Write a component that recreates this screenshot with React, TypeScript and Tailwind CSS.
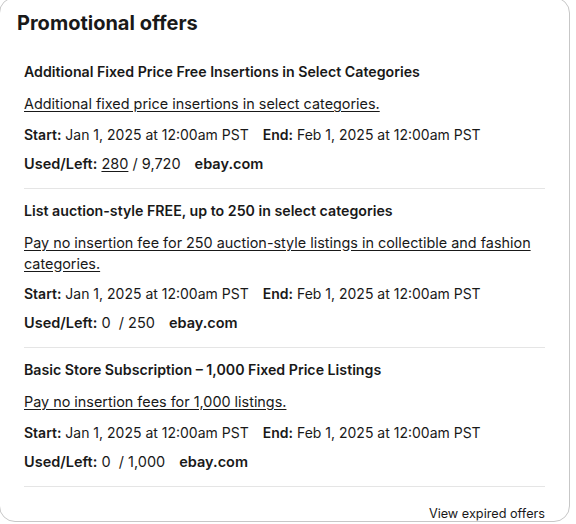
import React from "react";

type Offer = {
  title: string;
  desc: string;
  used: string;
  left: string;
  usedLink?: boolean;
};

const OFFERS: Offer[] = [
  {
    title: "Additional Fixed Price Free Insertions in Select Categories",
    desc: "Additional fixed price insertions in select categories.",
    used: "280",
    left: "9,720",
    usedLink: true,
  },
  {
    title: "List auction-style FREE, up to 250 in select categories",
    desc: "Pay no insertion fee for 250 auction-style listings in collectible and fashion categories.",
    used: "0",
    left: "250",
  },
  {
    title: "Basic Store Subscription – 1,000 Fixed Price Listings",
    desc: "Pay no insertion fees for 1,000 listings.",
    used: "0",
    left: "1,000",
  },
];

function OfferRow({ offer }: { offer: Offer }) {
  return (
    <div className="border-b border-[#e5e5e5] pt-[11px] pb-[14px] first:pt-0">
      <h3 className="text-[14.2px] leading-[22px] font-semibold">{offer.title}</h3>
      <a href="#" className="mt-[10px] block text-[14.4px] leading-[21px] underline underline-offset-[2px]">
        {offer.desc}
      </a>
      <p className="mt-[10.5px] text-[14px] leading-[20px]">
        <span className="font-semibold">Start:</span> Jan 1, 2025 at 12:00am PST
        <span className="ml-[14px] font-semibold">End:</span> Feb 1, 2025 at 12:00am PST
      </p>
      <p className="mt-[9px] text-[14.5px] leading-[20px]">
        <span className="font-semibold">Used/Left:</span>{" "}
        {offer.usedLink ? <a href="#" className="underline underline-offset-[2px]">{offer.used}</a> : <span>{offer.used}&nbsp;</span>}
        {" / "}
        {offer.left}
        <span className="ml-[14px] font-semibold">ebay.com</span>
      </p>
    </div>
  );
}

export default function App() {
  return (
    <div className="h-[524px] w-[576px] overflow-hidden bg-white text-[#191919]" style={{ fontFamily: "Inter, 'Noto Sans', sans-serif" }}>
      <section className="-mt-[3px] -ml-px h-[525px] w-[571px] rounded-[16px] border border-[#c7c7c7] pt-[11px]">
        <h2 className="pl-[17px] text-[20px] leading-[28px] font-bold">Promotional offers</h2>
        <div className="mt-[24px] px-[24px]">
          {OFFERS.map((o) => (
            <OfferRow key={o.title} offer={o} />
          ))}
          <div className="mt-[17.5px] text-right text-[12.7px] leading-[20px]">
            <a href="#">View expired offers</a>
          </div>
        </div>
      </section>
    </div>
  );
}
